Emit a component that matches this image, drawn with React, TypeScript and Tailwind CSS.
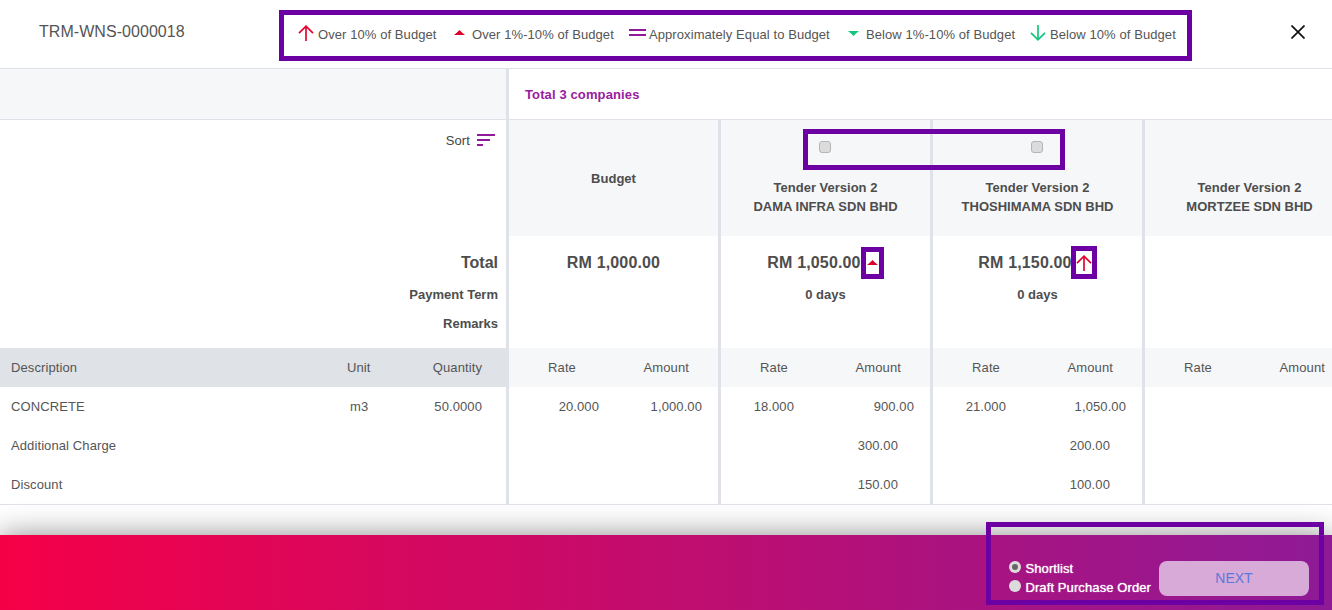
const F = "[font-family:'Liberation_Sans',Arial,sans-serif]";

function ArrowUp() {
  return (
    <svg width="16" height="16" viewBox="0 0 16 16" className="shrink-0" fill="none" stroke="#e0062f" strokeWidth="1.7">
      <path d="M8 16V1.2M1 8.2L8 1.2L15 8.2" />
    </svg>
  );
}
function ArrowDown() {
  return (
    <svg width="16" height="16" viewBox="0 0 16 16" className="shrink-0" fill="none" stroke="#12c77d" strokeWidth="1.7">
      <path d="M8 0V14.8M1 7.8L8 14.8L15 7.8" />
    </svg>
  );
}
function TriUp() {
  return (
    <svg width="11" height="5" viewBox="0 0 11 5" className="shrink-0">
      <path d="M5.5 0L8 2.5L11 5H0L3 2.5Z" fill="#dc0028" />
    </svg>
  );
}
function TriDown() {
  return (
    <svg width="11" height="5" viewBox="0 0 11 5" className="shrink-0">
      <path d="M0 0H11L8 2.5L5.5 5L3 2.5Z" fill="#12c77d" />
    </svg>
  );
}
function EqualIcon() {
  return (
    <svg width="17" height="7" viewBox="0 0 17 7" className="shrink-0">
      <rect width="17" height="2" fill="#93199b" />
      <rect y="5" width="17" height="2" fill="#93199b" />
    </svg>
  );
}

function Legend() {
  return (
    <div className="ml-[93px] mt-[10px] flex h-[51px] w-[913px] items-center border-[5px] border-[#6c00a2] text-[13px] leading-[15px] tracking-[0.08px] text-[#555]">
      <span className="ml-[14px] mt-[-6px]"><ArrowUp /></span>
      <span className="ml-[4px] mt-[-2px] w-[119px] whitespace-nowrap">Over 10% of Budget</span>
      <span className="ml-[17px] mt-[-6px]"><TriUp /></span>
      <span className="ml-[7px] mt-[-2px] w-[142px] whitespace-nowrap">Over 1%-10% of Budget</span>
      <span className="ml-[15px] mt-[-6px]"><EqualIcon /></span>
      <span className="ml-[3px] mt-[-2px] w-[181px] whitespace-nowrap">Approximately Equal to Budget</span>
      <span className="ml-[18px] mt-[-5px]"><TriDown /></span>
      <span className="ml-[7px] mt-[-2px] w-[149px] whitespace-nowrap">Below 1%-10% of Budget</span>
      <span className="ml-[15px] mt-[-6px]"><ArrowDown /></span>
      <span className="ml-[4px] mt-[-2px] whitespace-nowrap">Below 10% of Budget</span>
    </div>
  );
}

function Check() {
  return (
    <input
      type="checkbox"
      readOnly
      className="mr-[1px] block h-[12px] w-[12px] appearance-none rounded-[3px] border border-[#b5b5b5] bg-[#dcdcdc]"
    />
  );
}

type Col = {
  top?: string;
  name?: string;
  total?: string;
  terms?: string;
  check?: boolean;
  rate?: string;
  rateW: string;
  amtW: string;
  amount?: string;
  charge?: string;
  discount?: string;
  mark?: "tri" | "arrow";
};

const cols: Col[] = [
  { top: "Budget", total: "RM 1,000.00", rate: "20.000", rateW: "w-[90px]", amtW: "w-[103px]", amount: "1,000.00" },
  { top: "Tender Version 2", name: "DAMA INFRA SDN BHD", total: "RM 1,050.00", terms: "0 days", check: true, rate: "18.000", rateW: "w-[73px]", amtW: "w-[120px]", amount: "900.00", charge: "300.00", discount: "150.00", mark: "tri" },
  { top: "Tender Version 2", name: "THOSHIMAMA SDN BHD", total: "RM 1,150.00", terms: "0 days", check: true, rate: "21.000", rateW: "w-[73px]", amtW: "w-[120px]", amount: "1,050.00", charge: "200.00", discount: "100.00", mark: "arrow" },
  { top: "Tender Version 2", name: "MORTZEE SDN BHD", rateW: "w-[73px]", amtW: "w-[120px]" },
];

function Column({ c }: { c: Col }) {
  const isBudget = !c.name;
  return (
    <div className="w-[212px] shrink-0 border-l-[3px] border-[#dfe2e8] text-[13px] tracking-[0.1px] text-[#555]">
      <div className="flex h-[116px] flex-col items-center bg-[#f6f7f9] font-bold tracking-normal text-[#4d4d4d]">
        {isBudget ? (
          <div className="mt-[51px] leading-[15px]">{c.top}</div>
        ) : (
          <>
            <div className="mt-[21px] h-[13px]">{c.check && <Check />}</div>
            <div className="mt-[24px] leading-[19px]">{c.top}</div>
            <div className="leading-[19px]">{c.name}</div>
          </>
        )}
      </div>
      <div className="h-[112px] text-center font-bold tracking-normal text-[#4d4d4d]">
        <div className="flex h-[53px] items-center justify-center">
          {c.total && <span className="text-[16px] tracking-[0.15px]">{c.total}</span>}
          {c.mark === "tri" && (
            <span className="flex h-[32px] w-[23px] items-center justify-center border-[5px] border-[#6c00a2]">
              <TriUp />
            </span>
          )}
          {c.mark === "arrow" && (
            <span className="ml-[-1px] flex h-[33px] w-[26px] items-center justify-center border-[5px] border-[#6c00a2]">
              <ArrowUp />
            </span>
          )}
        </div>
        <div className="mt-[-4px] leading-[20px]">{c.terms}</div>
      </div>
      <div className="flex h-[39px] items-center bg-[#f6f7f9]">
        <span className="w-[106px] text-center">Rate</span>
        <span className="w-[74px] text-right">Amount</span>
      </div>
      <div className="flex h-[39px] items-center">
        <span className={`${c.rateW} text-right`}>{c.rate}</span>
        <span className={`${c.amtW} text-right`}>{c.amount}</span>
      </div>
      <div className="flex h-[39px] items-center justify-end pr-[32px]">{c.charge}</div>
      <div className="flex h-[39px] items-center justify-end pr-[32px]">{c.discount}</div>
    </div>
  );
}

function Left() {
  return (
    <div className="w-[506px] shrink-0 text-[13px] tracking-[0.1px] text-[#555]">
      <div className="flex h-[116px] items-start justify-end pr-[11px] pt-[12px]">
        <span className="leading-[17px] text-[#444]">Sort</span>
        <svg width="18" height="12" viewBox="0 0 18 12" className="ml-[7px] mt-[2px]" fill="#93199b">
          <rect width="18" height="2" />
          <rect y="5" width="13" height="2" />
          <rect y="10" width="6" height="2" />
        </svg>
      </div>
      <div className="flex h-[112px] flex-col items-end pr-[8px] font-bold tracking-normal text-[#4d4d4d]">
        <div className="flex h-[53px] items-center text-[16px]">Total</div>
        <div className="mt-[-4px] leading-[20px]">Payment Term</div>
        <div className="mt-[9px] leading-[20px]">Remarks</div>
      </div>
      <div className="flex h-[39px] items-center bg-[#dfe2e6] pl-[11px]">
        <span className="w-[336px]">Description</span>
        <span className="w-[24px]">Unit</span>
        <span className="w-[111px] text-right">Quantity</span>
      </div>
      <div className="flex h-[39px] items-center pl-[11px]">
        <span className="w-[336px]">CONCRETE</span>
        <span className="w-[24px] pl-[3px]">m3</span>
        <span className="w-[111px] text-right">50.0000</span>
      </div>
      <div className="flex h-[39px] items-center pl-[11px]">Additional Charge</div>
      <div className="flex h-[39px] items-center pl-[11px]">Discount</div>
    </div>
  );
}

export default function App() {
  return (
    <div className={`${F} flex h-[610px] w-[1332px] flex-col overflow-hidden bg-white`}>
      <header className="flex h-[69px] shrink-0 border-b border-[#dfe2e8]">
        <div className="ml-[39px] mt-[22px] w-[147px] whitespace-nowrap text-[16px] leading-[20px] tracking-[0.05px] text-[#555]">TRM-WNS-0000018</div>
        <Legend />
        <svg width="14" height="14" viewBox="0 0 14 14" className="ml-[99px] mt-[25px]" stroke="#111" strokeWidth="1.7">
          <path d="M0.5 0.5L13.5 13.5M13.5 0.5L0.5 13.5" />
        </svg>
      </header>

      <div className="flex h-[51px] shrink-0 border-b border-[#dfe2e8]">
        <div className="w-[506px] bg-[#f6f7f9]" />
        <div className="flex flex-1 items-center border-l-[3px] border-[#dfe2e8] pl-[16px] pt-[1px] text-[13px] font-bold tracking-[0.12px] text-[#98209f]">
          Total 3 companies
        </div>
      </div>

      <div className="relative flex h-[385px] shrink-0 border-b border-[#dfe2e8]">
        <Left />
        {cols.map((c, i) => (
          <Column key={i} c={c} />
        ))}
        <div className="absolute left-[803px] top-[9px] h-[41px] w-[262px] border-[5px] border-[#6c00a2]" />
      </div>

      <footer className="relative mt-[30px] h-[75px] shrink-0 bg-[linear-gradient(to_right,#f50047,#8e1a96)] shadow-[0_0_30px_rgba(0,0,0,0.45)]">
        <div className="flex h-full items-start justify-end">
          <div className="mr-[8px] mt-[24px] flex items-start">
            <div className="text-[13px] tracking-[0.1px] text-white [text-shadow:0_0_1px_#ffffff]">
              <label className="flex h-[19px] items-center">
                <span className="mr-[4px] mt-[-4px] flex h-[12px] w-[12px] items-center justify-center rounded-full bg-[#dcdcdc]">
                  <span className="h-[6px] w-[6px] rounded-full bg-[#666]" />
                </span>
                Shortlist
              </label>
              <label className="flex h-[19px] items-center">
                <span className="mr-[4px] mt-[-4px] h-[12px] w-[12px] rounded-full bg-[#dcdcdc]" />
                Draft Purchase Order
              </label>
            </div>
            <button className="ml-[8px] mr-[15px] mt-[2px] h-[35px] w-[150px] rounded-[8px] bg-[#d8aad8] text-[14px] text-[#5b78d8]">NEXT</button>
          </div>
        </div>
        <div className="absolute left-[986px] top-[-13px] h-[83px] w-[338px] border-[5px] border-[#6c00a2]" />
      </footer>
    </div>
  );
}
